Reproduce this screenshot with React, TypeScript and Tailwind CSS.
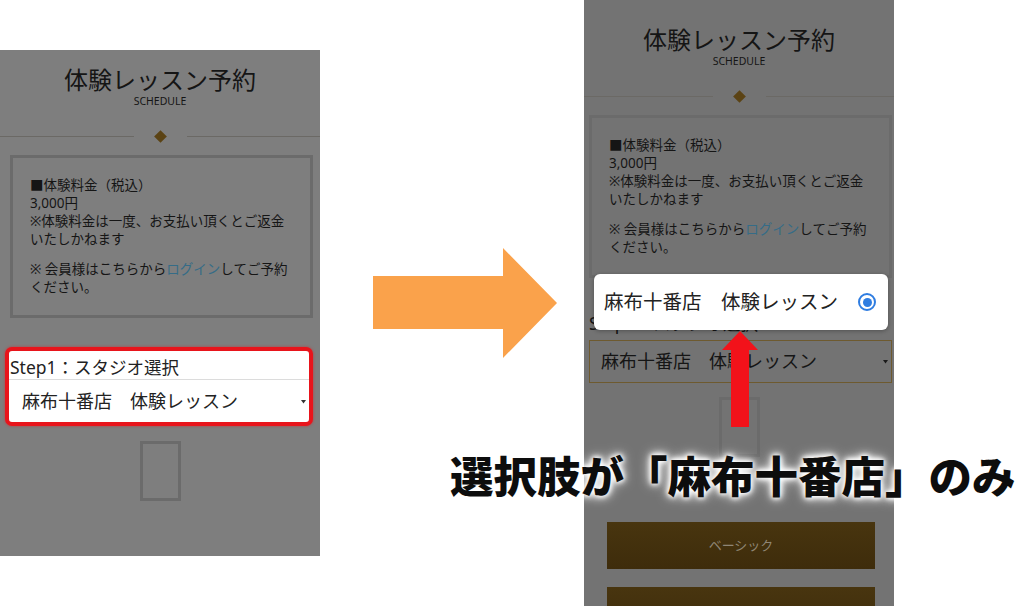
import React from 'react';

const PhoneContent: React.FC<{ highlighted: boolean }> = ({ highlighted }) => (
  <div className="w-[320px] flex flex-col text-[#151515] font-['Noto_Sans','Noto_Sans_CJK_JP',sans-serif]">
    <h2 className="pt-[15px] text-center text-[24px] leading-[30px] font-normal">体験レッスン予約</h2>
    <p className="text-center text-[10.5px] leading-[12px]">SCHEDULE</p>

    {/* divider */}
    <div className="mt-[23px] flex items-center h-[12px]">
      <div className="h-px flex-1 bg-[#6b6965]" />
      <div className="mx-[22px] w-[9px] h-[9px] rotate-45 bg-[#5b4314]" />
      <div className="h-px flex-1 bg-[#6b6965]" />
    </div>

    {/* price box */}
    <div className="mt-[13px] ml-[10px] w-[303px] h-[163px] border-[3px] border-[#6b6b6b] pt-[18px] pl-[17px] text-[13.5px] leading-[18px] whitespace-nowrap">
      <p>
        ■体験料金（税込）<br />
        3,000円<br />
        ※体験料金は一度、お支払い頂くとご返金<br />
        いたしかねます
      </p>
      <p className="mt-[12px]">
        ※ 会員様はこちらから<span className="text-[#356c87]">ログイン</span>してご予約<br />
        ください。
      </p>
    </div>

    {/* step 1 */}
    {highlighted ? (
      <div className="mt-[29px] ml-[5px] w-[308px] border-4 border-[#e8141b] rounded-[7px] bg-white shadow-[0_0_3px_rgba(232,20,27,0.6)] text-[#222]">
        <div className="pt-[4px] pl-px text-[17.5px] leading-[24px] border-b border-[#dcdcdc]">Step1：スタジオ選択</div>
        <div className="h-[42px] flex items-center justify-between pl-[13px] pr-[3px] text-[18px]">
          <span>麻布十番店　体験レッスン</span>
          <svg width="5" height="5" viewBox="0 0 5 5"><polygon points="0,1 5,1 2.5,4.5" fill="#333" /></svg>
        </div>
      </div>
    ) : (
      <div className="mt-[29px] ml-[5px] w-[308px] p-[4px] pb-[2px]">
        <div className="pl-px text-[17.5px] leading-[24px] pb-[5px]">Step1：スタジオ選択</div>
        <div className="ml-px w-[303px] h-[43px] border-[1.5px] border-[#6e5a2f] flex items-center justify-between pl-[11px] pr-[3px] text-[18px]">
          <span>麻布十番店　体験レッスン</span>
          <svg width="5" height="5" viewBox="0 0 5 5"><polygon points="0,1 5,1 2.5,4.5" fill="#1a1a1a" /></svg>
        </div>
      </div>
    )}

    <div className={`${highlighted ? 'mt-[15px]' : 'mt-[12px]'} ml-[140px] w-[41px] h-[60px] border-[3px] border-[#6b6b6b]`} />

    {/* plan buttons */}
    <div className="mt-[65px] ml-[28px] w-[268px] h-[47px] bg-gradient-to-b from-[#48350f] to-[#3e2c0b] flex items-center justify-center text-[13px] text-[#8f8675]">
      ベーシック
    </div>
    <div className="mt-[18px] ml-[28px] w-[268px] h-[47px] bg-gradient-to-b from-[#48350f] to-[#3e2c0b]" />
  </div>
);

const App: React.FC = () => {
  return (
    <div className="relative w-[1024px] h-[606px] bg-white overflow-hidden flex items-start">
      {/* before */}
      <div className="mt-[50px] w-[320px] h-[506px] overflow-hidden bg-[#7e7e7e]">
        <PhoneContent highlighted />
      </div>

      {/* orange arrow */}
      <svg className="ml-[53px] mt-[248px] shrink-0" width="185" height="110" viewBox="0 0 185 110">
        <polygon points="0,28 130,28 130,0 184,55 130,110 130,81 0,81" fill="#faa24b" />
      </svg>

      {/* after */}
      <div className="relative ml-[26px] w-[310px] h-[606px] overflow-hidden bg-[#737373]">
        <div className="-ml-[5px] pt-[10px]">
          <PhoneContent highlighted={false} />
        </div>

        {/* dropdown popup */}
        <div className="absolute left-[10px] top-[274px] w-[294px] h-[56px] bg-white rounded-[6px] shadow-[0_1px_4px_rgba(0,0,0,0.3)] flex items-center justify-between pl-[10px] pr-[12px] font-['Noto_Sans','Noto_Sans_CJK_JP',sans-serif] text-[19.5px] text-[#222]">
          <span>麻布十番店　体験レッスン</span>
          <span className="w-[18px] h-[18px] rounded-full border-2 border-[#2f7de1] flex items-center justify-center">
            <span className="w-[9px] h-[9px] rounded-full bg-[#2f7de1]" />
          </span>
        </div>

        {/* red arrow */}
        <svg className="absolute left-[138px] top-[331px]" width="36" height="96" viewBox="0 0 36 96">
          <polygon points="18,0 36,19 27,19 27,96 9,96 9,19 0,19" fill="#f2121a" />
        </svg>
      </div>

      {/* caption */}
      <p className="absolute left-[450px] top-[449px] whitespace-nowrap text-[43.5px] leading-[52px] font-black text-[#0d0d0d] font-['Noto_Sans_CJK_JP',sans-serif] [text-shadow:0_0_4px_#fff,0_0_6px_#fff,0_0_9px_#fff,0_0_14px_#fff]">
        選択肢が「麻布十番店」のみ
      </p>
    </div>
  );
};

export default App;
